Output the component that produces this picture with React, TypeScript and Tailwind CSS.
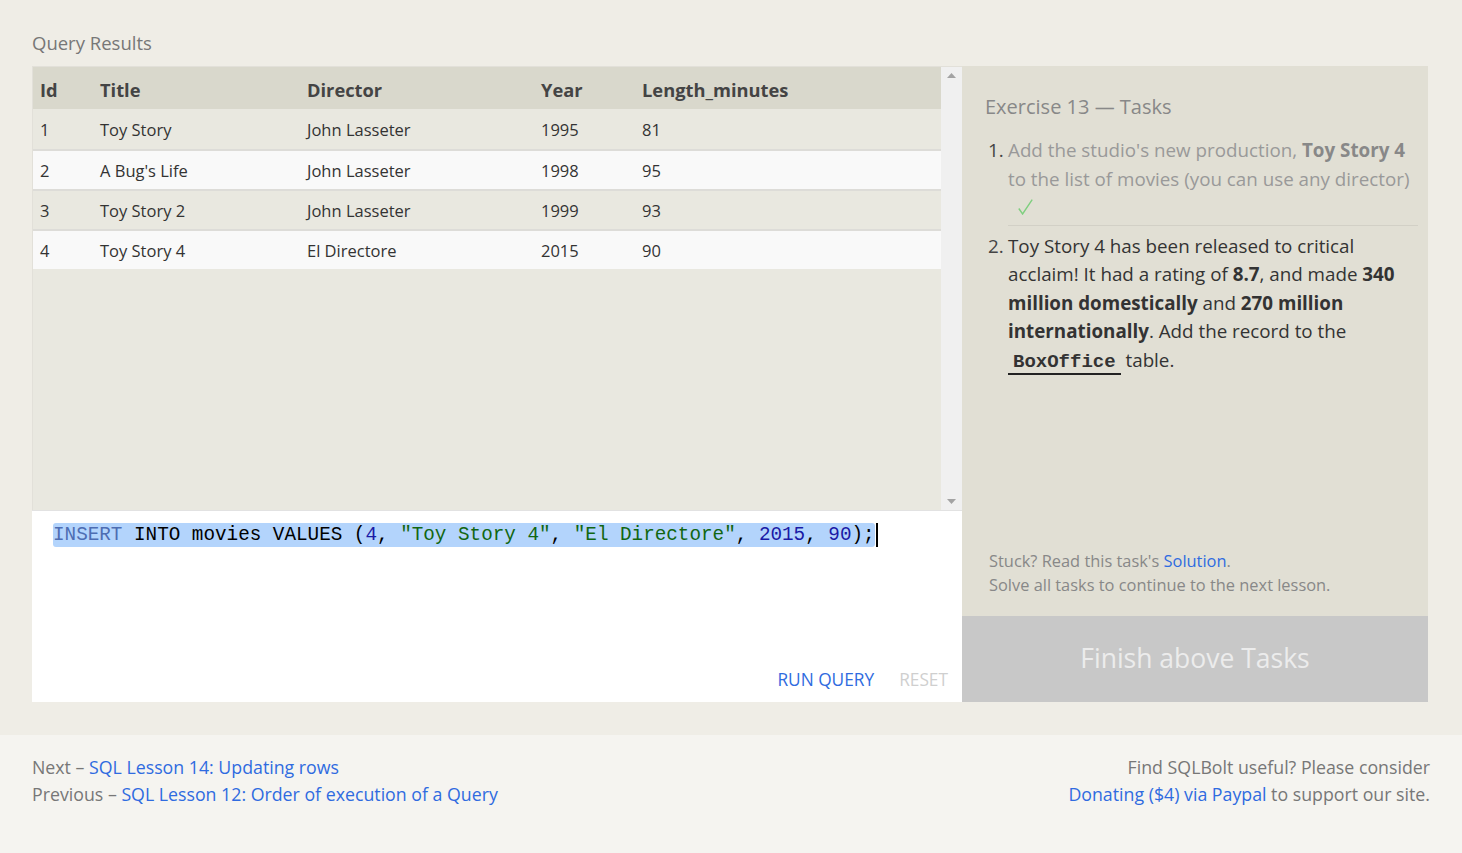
import React from "react";

const rows = [
  ["1", "Toy Story", "John Lasseter", "1995", "81"],
  ["2", "A Bug's Life", "John Lasseter", "1998", "95"],
  ["3", "Toy Story 2", "John Lasseter", "1999", "93"],
  ["4", "Toy Story 4", "El Directore", "2015", "90"],
];

function Cells({ r, bold }: { r: string[]; bold?: boolean }) {
  const b = bold ? "font-bold" : "";
  return (
    <>
      <div className={`w-[67px] pl-[7px] ${b}`}>{r[0]}</div>
      <div className={`w-[207px] ${b}`}>{r[1]}</div>
      <div className={`w-[234px] ${b}`}>{r[2]}</div>
      <div className={`w-[101px] ${b}`}>{r[3]}</div>
      <div className={`flex-1 ${b}`}>{r[4]}</div>
    </>
  );
}

export default function App() {
  return (
    <div className="min-h-screen bg-[#efede6] font-['Open_Sans',sans-serif] text-[#333]">
      <div className="px-[32px] pt-[30px]">
        <div className="text-[18.5px] leading-[26px] text-[#777]">Query Results</div>
        <div className="mt-[10px] flex h-[636px] w-[1396px]">
          {/* left */}
          <div className="flex w-[930px] flex-col">
            <div className="flex h-[444px] border-t border-l border-[#e2e0d9]">
              <div className="flex flex-1 flex-col bg-[#e9e8e0] text-[16.5px]">
                <div className="flex h-[42px] items-center bg-[#d9d8cc] pt-[4px] text-[18.3px] text-[#444]">
                  <Cells r={["Id", "Title", "Director", "Year", "Length_minutes"]} bold />
                </div>
                {rows.map((r, i) => (
                  <div
                    key={i}
                    className={`flex h-[40px] items-center pt-[3px] ${i % 2 === 0 ? "bg-[#e9e8e0]" : "bg-[#f9f9f9]"} ${i > 0 ? "border-t-2 border-[#dddcd8]" : ""}`}
                  >
                    <Cells r={r} />
                  </div>
                ))}
              </div>
              <div className="flex w-[21px] flex-col items-center justify-between bg-[#f0f0f0] py-[6px]">
                <svg width="9" height="5" viewBox="0 0 9 5"><polygon points="4.5,0 9,5 0,5" fill="#a3a3a3" /></svg>
                <svg width="9" height="5" viewBox="0 0 9 5"><polygon points="0,0 9,0 4.5,5" fill="#a3a3a3" /></svg>
              </div>
            </div>
            <div className="flex h-[192px] flex-col border-t border-[#e2e2e2] bg-white pl-[21px] pr-[14px]">
              <div className="mt-[12px] flex h-[24px] items-center font-['Liberation_Mono',monospace] text-[19.3px] leading-[24px]">
                <span className="rounded-[3px] bg-[#b3d4fc] whitespace-pre">
                  <span className="text-[#4d6db3]">INSERT</span>
                  <span className="text-black"> INTO movies VALUES (</span>
                  <span className="text-[#1a1aa6]">4</span>
                  <span className="text-black">, </span>
                  <span className="text-[#116611]">"Toy Story 4"</span>
                  <span className="text-black">, </span>
                  <span className="text-[#116611]">"El Directore"</span>
                  <span className="text-black">, </span>
                  <span className="text-[#1a1aa6]">2015</span>
                  <span className="text-black">, </span>
                  <span className="text-[#1a1aa6]">90</span>
                  <span className="text-black">);</span>
                </span>
                <span className="ml-[1px] inline-block h-[24px] w-[2px] bg-black" />
              </div>
              <div className="mt-auto mb-[9px] flex justify-end gap-[25px] text-[17.3px] leading-[26px]">
                <span className="text-[#2f6be0]">RUN QUERY</span>
                <span className="text-[#cfcfcf]">RESET</span>
              </div>
            </div>
          </div>
          {/* right */}
          <div className="flex w-[466px] flex-col">
            <div className="flex flex-1 flex-col bg-[#e1dfd4] pr-[10px] pl-[23px] pt-[26px] pb-[19px]">
              <div className="text-[20px] leading-[30px] text-[#888]">Exercise 13 — Tasks</div>
              <ol className="mt-[14px] text-[18.8px] leading-[28.5px]">
                <li className="flex">
                  <span className="w-[23px] shrink-0 pl-[3px] text-[#444]">1.</span>
                  <div className="flex-1 border-b border-[#d2d0c6] pb-[3px] text-[#999]">
                    Add the studio's new production, <b className="text-[#888]">Toy Story 4</b> to the list of movies (you can use any director)
                    <div className="flex h-[28.5px] items-center pl-[10px]">
                      <svg width="15" height="16" viewBox="0 0 15 16" fill="none">
                        <path d="M0.8 9.5 L4.6 15 L14.2 0.6" stroke="#7fcf7f" strokeWidth="1.4" />
                      </svg>
                    </div>
                  </div>
                </li>
                <li className="mt-[6px] flex">
                  <span className="w-[23px] shrink-0 pl-[3px] text-[#444]">2.</span>
                  <div className="flex-1 pr-[4px] text-[#333]">
                    Toy Story 4 has been released to critical acclaim! It had a rating of <b>8.7</b>, and made <b>340</b>{" "}
                    <b>million domestically</b> and <b>270 million</b> <b>internationally</b>. Add the record to the{" "}
                    <span className="border-b-2 border-[#222] px-[5px] font-['Liberation_Mono',monospace] text-[19px] font-bold">BoxOffice</span> table.
                  </div>
                </li>
              </ol>
              <div className="mt-auto pl-[4px] text-[16.4px] leading-[24px] text-[#888]">
                <div>
                  Stuck? Read this task's <span className="text-[#2f6be0]">Solution</span>.
                </div>
                <div>Solve all tasks to continue to the next lesson.</div>
              </div>
            </div>
            <div className="flex h-[86px] items-center justify-center bg-[#c8c8c8] text-[26.5px] text-[#ececec]">
              Finish above Tasks
            </div>
          </div>
        </div>
      </div>
      <div className="mt-[33px] flex h-[118px] justify-between bg-[#f5f4f0] px-[32px] pt-[19px] text-[17.75px] leading-[27px] text-[#777]">
        <div>
          <div>
            Next – <span className="text-[#2f6be0]">SQL Lesson 14: Updating rows</span>
          </div>
          <div>
            Previous – <span className="text-[#2f6be0]">SQL Lesson 12: Order of execution of a Query</span>
          </div>
        </div>
        <div className="text-right">
          <div>Find SQLBolt useful? Please consider</div>
          <div>
            <span className="text-[#2f6be0]">Donating ($4) via Paypal</span> to support our site.
          </div>
        </div>
      </div>
    </div>
  );
}
